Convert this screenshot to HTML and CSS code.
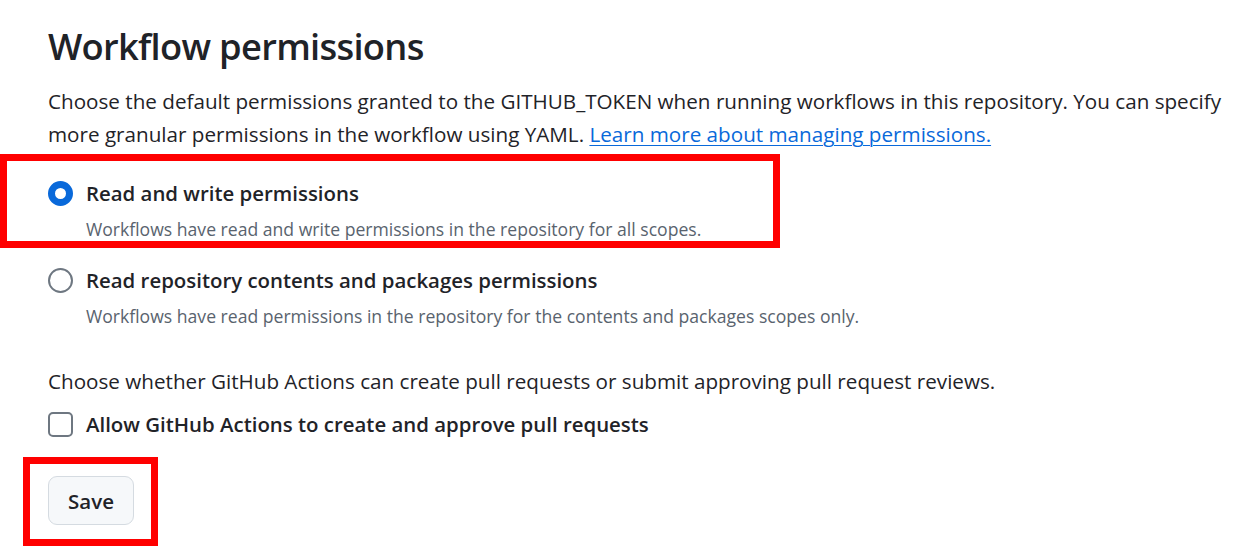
FILE: index.html
```html
<!DOCTYPE html>
<html lang="en">
<head>
<meta charset="utf-8">
<title>Workflow permissions</title>
<link rel="stylesheet" href="styles.css">
</head>
<body>
<div class="page">
  <h2 class="title">Workflow permissions</h2>
  <p class="desc">Choose the default permissions granted to the GITHUB_TOKEN when running workflows in this repository. You can specify more granular permissions in the workflow using YAML. <a href="#" class="link">Learn more about managing permissions.</a></p>

  <div class="options">
    <label class="option">
      <span class="radio radio-checked"></span>
      <span class="option-text">
        <span class="option-label">Read and write permissions</span>
        <span class="option-caption">Workflows have read and write permissions in the repository for all scopes.</span>
      </span>
    </label>
    <label class="option">
      <span class="radio"></span>
      <span class="option-text">
        <span class="option-label">Read repository contents and packages permissions</span>
        <span class="option-caption">Workflows have read permissions in the repository for the contents and packages scopes only.</span>
      </span>
    </label>
  </div>

  <p class="desc second">Choose whether GitHub Actions can create pull requests or submit approving pull request reviews.</p>
  <label class="check-row">
    <span class="checkbox"></span>
    <span class="option-label">Allow GitHub Actions to create and approve pull requests</span>
  </label>

  <button class="btn" type="button">Save</button>
</div>
<div class="highlight hl-radio"></div>
<div class="highlight hl-save"></div>
</body>
</html>
```
FILE: styles.css
```css
* { box-sizing: border-box; }
html, body { margin: 0; padding: 0; background: #ffffff; }
body {
  font-family: "Open Sans", "Noto Sans", sans-serif;
  color: #1f2328;
  width: 1259px;
  height: 546px;
  overflow: hidden;
  position: relative;
}
.page {
  padding: 20px 0 0 48px;
  display: flex;
  flex-direction: column;
  align-items: flex-start;
}
.title {
  font-size: 36.3px;
  font-weight: 560;
  line-height: 52px;
  margin: 0;
  letter-spacing: -0.7px;
}
.desc {
  font-size: 20.65px;
  line-height: 33px;
  margin: 13px 0 0 0;
  width: 1200px;
}
.link {
  color: #0969da;
  text-decoration: underline;
  text-decoration-thickness: 1px;
  text-underline-offset: 3px;
}
.options {
  display: flex;
  flex-direction: column;
  gap: 22px;
  margin-top: 27px;
}
.option {
  display: flex;
  align-items: flex-start;
  gap: 13px;
}
.radio {
  width: 25px;
  height: 25px;
  border-radius: 50%;
  border: 2px solid #6e7781;
  flex: none;
  margin-top: 3px;
  background: #fff;
}
.radio-checked {
  border: 7.5px solid #0969da;
}
.option-text {
  display: flex;
  flex-direction: column;
}
.option-label {
  font-size: 20.4px;
  font-weight: 600;
  line-height: 31px;
}
.option-caption {
  font-size: 17.6px;
  color: #59636e;
  line-height: 28px;
  margin-top: 6px;
}
.second {
  margin-top: 35px;
}
.check-row {
  display: flex;
  align-items: center;
  gap: 13px;
  margin-top: 11px;
}
.checkbox {
  width: 25px;
  height: 25px;
  border: 2px solid #6e7781;
  border-radius: 5px;
  flex: none;
}
.btn {
  margin-top: 36px;
  width: 86px;
  height: 49px;
  font-family: inherit;
  font-size: 20.5px;
  font-weight: 600;
  color: #1f2328;
  background: #f6f8fa;
  border: 1.5px solid #d5dbe1;
  border-radius: 9px;
  padding: 0;
}
.highlight {
  position: absolute;
  border: 7px solid #ff0000;
  pointer-events: none;
}
.hl-radio {
  left: 0;
  top: 154px;
  width: 780px;
  height: 94px;
}
.hl-save {
  left: 23px;
  top: 457px;
  width: 135px;
  height: 89px;
}
```
